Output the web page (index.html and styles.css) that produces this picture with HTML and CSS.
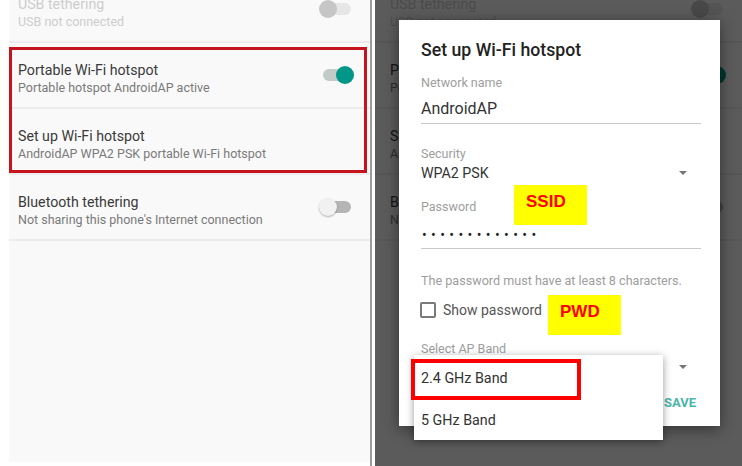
FILE: index.html
```html
<!DOCTYPE html>
<html>
<head>
<meta charset="utf-8">
<link rel="stylesheet" href="styles.css">
</head>
<body>
<div class="screen">
  <section class="panel left">
    <div class="list">
      <div class="row disabled">
        <div class="txt"><div class="title">USB tethering</div><div class="sub">USB not connected</div></div>
        <span class="toggle off"><span class="thumb"></span></span>
      </div>
      <div class="row">
        <div class="txt"><div class="title">Portable Wi-Fi hotspot</div><div class="sub">Portable hotspot AndroidAP active</div></div>
        <span class="toggle on"><span class="thumb"></span></span>
      </div>
      <div class="row">
        <div class="txt"><div class="title">Set up Wi-Fi hotspot</div><div class="sub">AndroidAP WPA2 PSK portable Wi-Fi hotspot</div></div>
      </div>
      <div class="row">
        <div class="txt"><div class="title">Bluetooth tethering</div><div class="sub">Not sharing this phone's Internet connection</div></div>
        <span class="toggle off"><span class="thumb"></span></span>
      </div>
    </div>
    <div class="highlight"></div>
  </section>

  <div class="split"></div>

  <section class="panel right">
    <div class="list">
      <div class="row disabled">
        <div class="txt"><div class="title">USB tethering</div><div class="sub">USB not connected</div></div>
        <span class="toggle off"><span class="thumb"></span></span>
      </div>
      <div class="row">
        <div class="txt"><div class="title">Portable Wi-Fi hotspot</div><div class="sub">Portable hotspot AndroidAP active</div></div>
        <span class="toggle on"><span class="thumb"></span></span>
      </div>
      <div class="row">
        <div class="txt"><div class="title">Set up Wi-Fi hotspot</div><div class="sub">AndroidAP WPA2 PSK portable Wi-Fi hotspot</div></div>
      </div>
      <div class="row">
        <div class="txt"><div class="title">Bluetooth tethering</div><div class="sub">Not sharing this phone's Internet connection</div></div>
        <span class="toggle off"><span class="thumb"></span></span>
      </div>
    </div>
    <div class="scrim"></div>

    <div class="dialog">
      <div class="dlg-title">Set up Wi-Fi hotspot</div>
      <div class="label l-name">Network name</div>
      <div class="input name">AndroidAP</div>
      <div class="label l-sec">Security</div>
      <div class="spinner sec"><span>WPA2 PSK</span><span class="arrow"></span></div>
      <div class="label l-pass">Password</div>
      <div class="input pass">•••••••••••••</div>
      <div class="hint">The password must have at least 8 characters.</div>
      <label class="check"><span class="box"></span><span>Show password</span></label>
      <div class="label l-band">Select AP Band</div>
      <div class="spinner band"><span></span><span class="arrow"></span></div>
      <div class="actions"><span class="btn">SAVE</span></div>
    </div>

    <div class="menu">
      <div class="item">2.4 GHz Band</div>
      <div class="item">5 GHz Band</div>
      <div class="mark"></div>
    </div>

    <div class="tag ssid">SSID</div>
    <div class="tag pwd">PWD</div>
  </section>
</div>
</body>
</html>
```

FILE: styles.css
```css
* { box-sizing: border-box; }
html, body { margin: 0; padding: 0; background: #ffffff; }
body { font-family: Roboto, "Noto Sans", sans-serif; }

.screen {
  display: flex;
  width: 742px;
  height: 466px;
  overflow: hidden;
}

.panel {
  position: relative;
  overflow: hidden;
  background: #f9f9f9;
}
.panel.left {
  margin-left: 9px;
  width: 361px;
  height: 462px;
}
.split {
  width: 2px;
  height: 466px;
  margin-right: 3px;
  background: #9c9c9c;
}
.panel.right {
  width: 367px;
  height: 466px;
}

.list { margin-top: -23px; }
.row {
  display: flex;
  align-items: center;
  justify-content: space-between;
  height: 66px;
  border-bottom: 2px solid #ececec;
  padding: 0 16px 0 9px;
}
.right .row { padding-left: 15px; }
.txt { padding-top: 6px; }
.title {
  font-size: 14.2px;
  line-height: 18px;
  color: #3a3a3a;
}
.sub {
  font-size: 12.5px;
  line-height: 16px;
  margin-top: 1px;
  color: #7a7a7a;
}
.disabled .title, .disabled .sub { color: #cdcdcd; }

.toggle {
  position: relative;
  width: 35px;
  height: 18px;
  flex: none;
}
.toggle::before {
  content: "";
  position: absolute;
  left: 4px;
  right: 3px;
  top: 3px;
  height: 12px;
  border-radius: 6px;
  background: #b5b5b5;
}
.toggle .thumb {
  position: absolute;
  top: 0;
  width: 18px;
  height: 18px;
  border-radius: 50%;
}
.toggle.off .thumb {
  left: 0;
  background: #f1f1f1;
  box-shadow: 0 1px 2px rgba(0,0,0,0.3);
}
.toggle.on::before { background: #c3cbc9; }
.toggle.on .thumb {
  right: 0;
  background: #009688;
}
.disabled .toggle::before { background: #e6e6e6; }
.disabled .toggle .thumb { background: #c6c6c6; box-shadow: none; }

.highlight {
  position: absolute;
  left: 0;
  top: 47px;
  width: 358px;
  height: 126px;
  border: 3px solid #c5141c;
}

.scrim {
  position: absolute;
  inset: 0;
  background: rgba(0,0,0,0.635);
}

.dialog {
  position: absolute;
  left: 24px;
  top: 20px;
  width: 321px;
  height: 406px;
  background: #ffffff;
  padding: 19px 19px 0 22px;
  box-shadow: 0 3px 14px rgba(0,0,0,0.45);
}
.dlg-title {
  font-size: 17.7px;
  font-weight: 500;
  line-height: 22px;
  color: #222222;
}
.label {
  font-size: 12.5px;
  line-height: 16px;
  color: #9e9e9e;
}
.l-name { margin-top: 14px; }
.input {
  border-bottom: 1px solid #c9c9c9;
  color: #333333;
}
.input.name {
  margin-top: 7px;
  font-size: 16px;
  line-height: 22px;
  padding-bottom: 3px;
}
.l-sec { margin-top: 22px; }
.spinner {
  display: flex;
  align-items: center;
  justify-content: space-between;
  height: 20px;
  padding-right: 14px;
  font-size: 14.2px;
  color: #333333;
}
.sec { margin-top: 1px; }
.arrow {
  width: 0;
  height: 0;
  border-left: 4px solid transparent;
  border-right: 4px solid transparent;
  border-top: 4px solid #757575;
}
.l-pass { margin-top: 16px; }
.input.pass {
  margin-top: 10px;
  font-size: 14px;
  line-height: 20px;
  padding-bottom: 3px;
  padding-left: 1px;
  letter-spacing: 4.4px;
  color: #222222;
}
.hint {
  margin-top: 24px;
  font-size: 12.6px;
  line-height: 16px;
  color: #9e9e9e;
}
.check {
  display: flex;
  align-items: center;
  gap: 7px;
  margin-top: 11px;
  margin-left: -1px;
  height: 20px;
  font-size: 14px;
  color: #555555;
}
.box {
  width: 16px;
  height: 16px;
  border: 2px solid #7a7a7a;
  border-radius: 2px;
}
.l-band { margin-top: 21px; }
.actions {
  display: flex;
  justify-content: flex-end;
  margin-top: 16px;
  padding-right: 5px;
  line-height: 20px;
}
.btn {
  font-size: 13px;
  font-weight: 700;
  color: #4db6ac;
}

.menu {
  position: absolute;
  left: 39px;
  top: 355px;
  width: 249px;
  height: 85px;
  background: #ffffff;
  padding-top: 2px;
  box-shadow: 0 2px 8px rgba(0,0,0,0.4);
}
.item {
  height: 42px;
  line-height: 42px;
  padding-left: 7px;
  font-size: 14.3px;
  color: #333333;
}
.mark {
  position: absolute;
  left: -3px;
  top: 4px;
  width: 170px;
  height: 41px;
  border: 4px solid #ff0000;
}

.tag {
  position: absolute;
  width: 73px;
  height: 40px;
  padding: 7px 0 0 12px;
  background: #ffff00;
  color: #ff0000;
  font-family: "Liberation Sans", Arial, sans-serif;
  font-weight: 700;
  font-size: 17px;
  line-height: 20px;
}
.ssid { left: 139px; top: 185px; }
.pwd { left: 173px; top: 295px; }
```
